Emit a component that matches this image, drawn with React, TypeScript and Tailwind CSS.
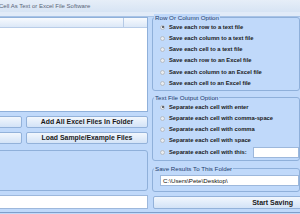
import type { ReactNode } from 'react';

const ROW_OPTIONS = [
  'Save each row to a text file',
  'Save each column to a text file',
  'Save each cell to a text file',
  'Save each row to an Excel file',
  'Save each column to an Excel file',
  'Save each cell to an Excel file',
];

const OUTPUT_OPTIONS = [
  'Separate each cell with enter',
  'Separate each cell with comma-space',
  'Separate each cell with comma',
  'Separate each cell with space',
];

function Radio({ checked = false }: { checked?: boolean }) {
  return (
    <span className="flex h-[5px] w-[5px] shrink-0 items-center justify-center rounded-full border border-[#b4bcc6] bg-[#e9ecf0]">
      {checked ? <span className="h-[2px] w-[2px] rounded-full bg-[#3a3f48]" /> : null}
    </span>
  );
}

function Group({ title, className, children }: { title: string; className: string; children: ReactNode }) {
  return (
    <div className={`relative rounded-[3px] border border-[#8fb0da] ${className}`}>
      <span className="absolute -top-[4px] left-[1px] bg-[#c0d9fa] px-[1px] text-[6.2px] leading-[7px] text-[#1d3b6c]">
        {title}
      </span>
      {children}
    </div>
  );
}

function Button({ label, className }: { label: string; className: string }) {
  return (
    <button
      type="button"
      className={`h-[12px] rounded-[2px] border border-[#93b2da] bg-gradient-to-b from-[#f2f7fd] to-[#d3e3f7] text-[6.9px] font-bold leading-[10px] text-[#1a1a1a] ${className}`}
    >
      {label}
    </button>
  );
}

export default function App() {
  return (
    <div className="flex h-[214px] w-[300px] flex-col overflow-hidden bg-[#c0d9fa] font-['Liberation_Sans',Arial,sans-serif]">
      <div className="flex h-[12px] shrink-0 items-center bg-gradient-to-b from-[#e6eef8] to-[#d7e4f4]">
        <span className="-ml-[1px] text-[6px] leading-[8px] text-[#5a6578]">Cell As Text or Excel File Software</span>
      </div>
      <div className="h-[5px] shrink-0 border-b border-[#a8c3e6] bg-[#e1ebf8]" />

      <div className="flex flex-1">
        <div className="-ml-[4px] flex w-[152px] shrink-0 flex-col">
          <div className="flex h-[95px] flex-col border border-[#8fb0da] bg-white">
            <div className="flex h-[10px] border-b border-[#b9cde8] bg-gradient-to-b from-[#f7fafe] to-[#dce8f7]">
              <div className="w-[127px] border-r border-[#b5cae6]" />
              <div className="flex-1" />
            </div>
          </div>
          <div className="mt-[4px] flex gap-[4px]">
            <Button label="" className="w-[26px]" />
            <Button label="Add All Excel Files In Folder" className="flex-1" />
          </div>
          <div className="mt-[4px] flex gap-[4px]">
            <Button label="" className="w-[26px]" />
            <Button label="Load Sample/Example Files" className="flex-1" />
          </div>
          <div className="mt-[6px] h-[41px] rounded-[3px] border border-[#8fb0da]" />
          <div className="mt-[4px] h-[14px] border border-[#9db8dc] bg-white" />
        </div>

        <div className="flex w-[152px] shrink-0 flex-col pl-[4px]">
          <Group title="Row Or Column Option" className="flex h-[74px] flex-col pl-[7px] pt-[3.4px]">
            {ROW_OPTIONS.map((o, i) => (
              <div key={o} className="flex h-[11.3px] items-center gap-[4px]">
                <Radio checked={i === 0} />
                <span className="whitespace-nowrap text-[5.8px] font-bold leading-[7px] text-[#1a1a1a]">{o}</span>
              </div>
            ))}
          </Group>

          <Group title="Text File Output Option" className="mt-[6px] flex h-[64px] flex-col pl-[7px] pt-[3.4px]">
            {OUTPUT_OPTIONS.map((o, i) => (
              <div key={o} className="flex h-[11.25px] items-center gap-[4px]">
                <Radio checked={i === 0} />
                <span className="whitespace-nowrap text-[5.8px] font-bold leading-[7px] text-[#1a1a1a]">{o}</span>
              </div>
            ))}
            <div className="flex h-[11.25px] items-center gap-[4px]">
              <Radio />
              <span className="w-[80px] shrink-0 whitespace-nowrap text-[5.8px] font-bold leading-[7px] text-[#1a1a1a]">
                Separate each cell with this:
              </span>
              <div className="h-[11px] flex-1 border border-[#9db8dc] bg-white" />
            </div>
          </Group>

          <Group title="Save Results To This Folder" className="mt-[7px] h-[24px] pl-[7px] pt-[6px]">
            <div className="flex h-[11px] items-center border border-[#9db8dc] bg-white pl-[2px]">
              <span className="text-[6.2px] leading-[7px] text-[#111]">C:\Users\Pete\Desktop\</span>
            </div>
          </Group>

          <button
            type="button"
            className="-mr-[4px] ml-[1px] mt-[4px] h-[13px] rounded-[2px] border border-[#93b2da] bg-gradient-to-b from-[#f2f7fd] to-[#d3e3f7] pr-[10px] text-right text-[7px] font-bold leading-[11px] text-[#1a1a1a]"
          >
            Start Saving
          </button>
        </div>
      </div>
      <div className="mb-[1px] h-[1px] shrink-0 bg-[#7f9fca]" />
    </div>
  );
}
